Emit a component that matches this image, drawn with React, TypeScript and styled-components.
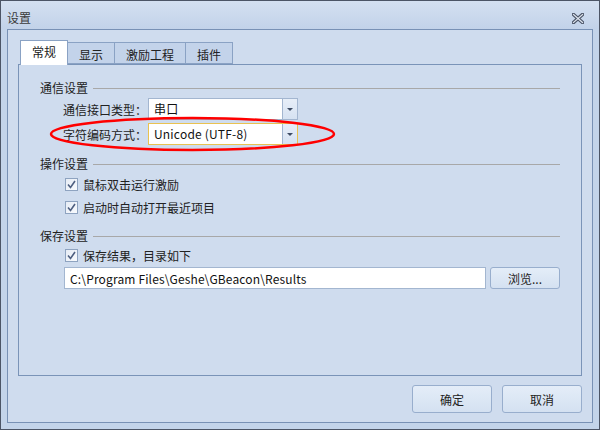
import React from "react";
import styled, { createGlobalStyle } from "styled-components";

const Global = createGlobalStyle`
  html, body { margin: 0; padding: 0; background: #c4d5eb; }
  body { font-family: "Noto Sans CJK SC", "Noto Sans", sans-serif; font-size: 12px; color: #1f1f1f; }
  * { box-sizing: border-box; }
`;

const Window = styled.div`
  position: relative;
  width: 600px;
  height: 430px;
  border: 1px solid #4c5566;
  background: #c3d4ea;
  display: flex;
  flex-direction: column;
`;

const TitleBar = styled.div`
  height: 28px;
  flex: none;
  display: flex;
  align-items: center;
  justify-content: space-between;
  padding: 6px 15px 0 6px;
  background: linear-gradient(#d4e0f1, #c2d2e9);
`;

const Title = styled.span`
  font-size: 12px;
  color: #3a3a3a;
  line-height: 16px;
`;

const CloseButton = styled.div`
  width: 12px;
  height: 11px;
  display: flex;
`;

const Frame = styled.div`
  flex: 1;
  margin: 0 6px 6px 6px;
  border: 1px solid #7891b5;
  background: #cfdcee;
  padding: 10px 10px 9px 10px;
  display: flex;
  flex-direction: column;
  min-height: 0;
`;

const TabStrip = styled.div`
  height: 24px;
  flex: none;
  display: flex;
  align-items: flex-end;
  margin-left: 2px;
  position: relative;
  z-index: 1;
`;

const Tab = styled.div<{ $active?: boolean; $w: number }>`
  width: ${(p) => p.$w}px;
  height: ${(p) => (p.$active ? 25 : 22)}px;
  margin-bottom: ${(p) => (p.$active ? -1 : 0)}px;
  margin-left: -1px;
  &:first-child { margin-left: 0; }
  border: 1px solid #8aa2c4;
  border-bottom: ${(p) => (p.$active ? "none" : "1px solid #8aa2c4")};
  background: ${(p) => (p.$active ? "#ffffff" : "#c3d3ea")};
  display: flex;
  align-items: center;
  justify-content: center;
  padding-top: ${(p) => (p.$active ? 0 : 2)}px;
  padding-bottom: ${(p) => (p.$active ? 3 : 0)}px;
  color: #222;
  position: relative;
  z-index: ${(p) => (p.$active ? 2 : 1)};
`;

const Panel = styled.div`
  flex: 1;
  border: 1px solid #7a94b8;
  background: #cfdcee;
  padding: 15px 21px 0 21px;
  display: flex;
  flex-direction: column;
  min-height: 0;
`;

const SectionHeader = styled.div<{ $mt: number }>`
  height: 16px;
  margin-top: ${(p) => p.$mt}px;
  display: flex;
  align-items: center;
  gap: 5px;
  color: #222;
  line-height: 16px;
  &::after {
    content: "";
    flex: 1;
    height: 1px;
    background: #a8a8a8;
  }
`;

const FieldRow = styled.div<{ $mt: number }>`
  height: 22px;
  margin-top: ${(p) => p.$mt}px;
  margin-left: 23px;
  display: flex;
  align-items: center;
`;

const Label = styled.span`
  width: 85px;
  color: #222;
  white-space: nowrap;
`;

const Combo = styled.div<{ $focused?: boolean }>`
  width: 150px;
  height: 22px;
  border: 1px solid ${(p) => (p.$focused ? "#e9c250" : "#a3b6d0")};
  background: #fff;
  display: flex;
`;

const ComboText = styled.span`
  flex: 1;
  padding-left: 5px;
  display: flex;
  align-items: center;
  color: #111;
  line-height: 16px;
  letter-spacing: 0.2px;
`;

const ComboButton = styled.div`
  width: 15px;
  border-left: 1px solid #a3b6d0;
  background: linear-gradient(#e7eef8, #d6e2f2);
  display: flex;
  align-items: center;
  justify-content: center;
`;

const Arrow = styled.div`
  width: 0;
  height: 0;
  border-left: 3px solid transparent;
  border-right: 3px solid transparent;
  border-top: 3px solid #3d4b63;
  margin-top: 1px;
`;

const CheckRow = styled.div<{ $mt?: number }>`
  height: 23px;
  margin-top: ${(p) => p.$mt ?? 0}px;
  margin-left: 25px;
  display: flex;
  align-items: center;
  gap: 5px;
  color: #222;
`;

const CheckBox = styled.div`
  width: 13px;
  height: 13px;
  border: 1px solid #8ea3c0;
  background: linear-gradient(135deg, #e6ecf5, #f8fafd);
  display: flex;
  align-items: center;
  justify-content: center;
`;

const PathRow = styled.div`
  height: 22px;
  margin-left: 24px;
  display: flex;
  gap: 4px;
`;

const TextField = styled.div`
  flex: 1;
  border: 1px solid #a3b6d0;
  background: #fff;
  padding-left: 5px;
  display: flex;
  align-items: center;
  color: #111;
  white-space: nowrap;
  letter-spacing: 0.15px;
`;

const Button = styled.div<{ $w: number; $h: number }>`
  width: ${(p) => p.$w}px;
  height: ${(p) => p.$h}px;
  border: 1px solid #98aecd;
  border-radius: 3px;
  background: linear-gradient(#e4edf8, #d4e1f1);
  display: flex;
  align-items: center;
  justify-content: center;
  color: #222;
`;

const ButtonRow = styled.div`
  height: 28px;
  flex: none;
  margin-top: 9px;
  display: flex;
  justify-content: flex-end;
  gap: 10px;
`;

const Annotation = styled.svg`
  position: absolute;
  left: 47px;
  top: 114px;
  pointer-events: none;
`;

const CloseIcon = () => (
  <svg width="12" height="11" viewBox="0 0 12 11">
    <path d="M1.5 1.5 L10.5 9.5 M10.5 1.5 L1.5 9.5" stroke="#4d5668" strokeWidth="3.6" strokeLinecap="square" />
    <path d="M1.5 1.5 L10.5 9.5 M10.5 1.5 L1.5 9.5" stroke="#dfe6f0" strokeWidth="1.2" strokeLinecap="square" />
  </svg>
);

const CheckMark = () => (
  <svg width="9" height="9" viewBox="0 0 9 9">
    <path d="M1 4.5 L3.5 7.5 L8 1" fill="none" stroke="#4e5f80" strokeWidth="1.6" />
  </svg>
);

export default function App() {
  return (
    <>
      <Global />
      <Window>
        <TitleBar>
          <Title>设置</Title>
          <CloseButton>
            <CloseIcon />
          </CloseButton>
        </TitleBar>
        <Frame>
          <TabStrip>
            <Tab $active $w={48}>常规</Tab>
            <Tab $w={48}>显示</Tab>
            <Tab $w={72}>激励工程</Tab>
            <Tab $w={48}>插件</Tab>
          </TabStrip>
          <Panel>
            <SectionHeader $mt={0}>通信设置</SectionHeader>
            <FieldRow $mt={2}>
              <Label>通信接口类型：</Label>
              <Combo>
                <ComboText>串口</ComboText>
                <ComboButton><Arrow /></ComboButton>
              </Combo>
            </FieldRow>
            <FieldRow $mt={3}>
              <Label>字符编码方式：</Label>
              <Combo $focused>
                <ComboText>Unicode (UTF-8)</ComboText>
                <ComboButton><Arrow /></ComboButton>
              </Combo>
            </FieldRow>
            <SectionHeader $mt={11}>操作设置</SectionHeader>
            <CheckRow $mt={1}>
              <CheckBox><CheckMark /></CheckBox>
              鼠标双击运行激励
            </CheckRow>
            <CheckRow>
              <CheckBox><CheckMark /></CheckBox>
              启动时自动打开最近项目
            </CheckRow>
            <SectionHeader $mt={9}>保存设置</SectionHeader>
            <CheckRow>
              <CheckBox><CheckMark /></CheckBox>
              保存结果，目录如下
            </CheckRow>
            <PathRow>
              <TextField>C:\Program Files\Geshe\GBeacon\Results</TextField>
              <Button $w={70} $h={22}>浏览...</Button>
            </PathRow>
          </Panel>
          <ButtonRow>
            <Button $w={80} $h={28}>确定</Button>
            <Button $w={80} $h={28}>取消</Button>
          </ButtonRow>
        </Frame>
        <Annotation width="290" height="38" viewBox="0 0 290 38">
          <ellipse cx="144.5" cy="19" rx="141.5" ry="16" fill="none" stroke="#ff0000" strokeWidth="2.5" />
        </Annotation>
      </Window>
    </>
  );
}
